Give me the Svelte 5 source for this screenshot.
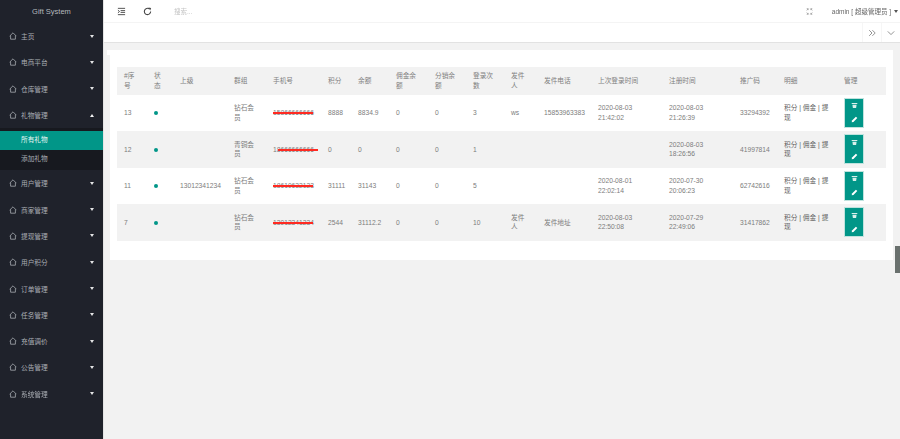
<script>
  const menu = [
    { name: '主页' },
    { name: '电商平台' },
    { name: '仓库管理' },
    { name: '礼物管理', open: true, children: ['所有礼物', '添加礼物'] },
    { name: '用户管理' },
    { name: '商家管理' },
    { name: '提现管理' },
    { name: '用户积分' },
    { name: '订单管理' },
    { name: '任务管理' },
    { name: '充值调价' },
    { name: '公告管理' },
    { name: '系统管理' }
  ];

  const widths = [30, 26, 54, 39, 55, 30, 38, 39, 38, 38, 33, 54, 71, 71, 44, 60, 49];
  const heads = ['#序号', '状态', '上级', '群组', '手机号', '积分', '余额', '佣金余额', '分销余额', '登录次数', '发件人', '发件电话', '上次登录时间', '注册时间', '推广码', '明细', '管理'];

  const rows = [
    { id: 13, parent: '', group: '钻石会员', phone: '15866666666', strike: 0, points: '8888', balance: '8834.9', logins: 3, sender: 'ws', tel: '15853963383', last: '2020-08-03 21:42:02', reg: '2020-08-03 21:26:39', code: '33294392' },
    { id: 12, parent: '', group: '青铜会员', phone: '18666666666', strike: 5, points: '0', balance: '0', logins: 1, sender: '', tel: '', last: '', reg: '2020-08-03 18:26:56', code: '41997814' },
    { id: 11, parent: '13012341234', group: '钻石会员', phone: '18610632123', strike: 0, points: '31111', balance: '31143', logins: 5, sender: '', tel: '', last: '2020-08-01 22:02:14', reg: '2020-07-30 20:06:23', code: '62742616' },
    { id: 7, parent: '', group: '钻石会员', phone: '13012341234', strike: 0, points: '2544', balance: '31112.2', logins: 10, sender: '发件人', tel: '发件地址', last: '2020-08-03 22:50:08', reg: '2020-07-29 22:49:06', code: '31417862' }
  ];
</script>

<div class="layout">
  <aside class="sidebar">
    <div class="brand">Gift System</div>
    <nav>
      {#each menu as item}
        <div class="item">
          <svg class="home" viewBox="0 0 10 10" width="8" height="8"><path d="M.8 5.200 5 1l4.200 4.200M2 4.500V9h6V4.500" fill="none" stroke="currentColor" stroke-width="0.9" /></svg>
          <span class="label">{item.name}</span>
          <i class="caret" class:up={item.open}></i>
        </div>
        {#if item.children}
          <div class="sub">
            {#each item.children as child, i}
              <div class="sub-item" class:active={i === 0}>{child}</div>
            {/each}
          </div>
        {/if}
      {/each}
    </nav>
  </aside>

  <div class="main">
    <header class="topbar">
      <svg class="tool" viewBox="0 0 10 10" width="9" height="9"><path d="M1 1.500h8M4 4h5M4 6h5M1 8.500h8M1 3.500 2.800 5 1 6.500" fill="none" stroke="#444" stroke-width="1" /></svg>
      <svg class="tool refresh" viewBox="0 0 10 10" width="9" height="9"><path d="M8.500 5A3.500 3.500 0 1 1 7 2.100" fill="none" stroke="#444" stroke-width="1.200" /><path d="M6 .5 9 1 8 3.800Z" fill="#444" /></svg>
      <span class="search">搜索...</span>
      <svg class="full" viewBox="0 0 10 10" width="7" height="7"><path d="M1 3.500 3.500 1M1 1h2v2M9 3.500 6.500 1M9 1H7v2M1 6.500 3.500 9M1 9h2V7M9 6.500 6.500 9M9 9H7V7" fill="none" stroke="#888" stroke-width="0.9" /></svg>
      <span class="user">admin [ 超级管理员 ]</span>
      <i class="user-caret"></i>
    </header>

    <div class="tabs">
      <span class="tab-btn">
        <svg viewBox="0 0 10 10" width="8" height="8"><path d="M1.500 1.500 5 5 1.500 8.500M5.500 1.500 9 5 5.500 8.500" fill="none" stroke="#777" stroke-width="1" /></svg>
      </span>
      <span class="tab-btn">
        <svg viewBox="0 0 10 10" width="8" height="8"><path d="M1 3l4 4 4-4" fill="none" stroke="#777" stroke-width="1" /></svg>
      </span>
    </div>

    <section class="content">
      <div class="lip"></div>
      <div class="card">
        <table>
          <colgroup>
            {#each widths as w}
              <col style="width: {w}px" />
            {/each}
          </colgroup>
          <thead>
            <tr>
              {#each heads as h}
                <th>{h}</th>
              {/each}
            </tr>
          </thead>
          <tbody>
            {#each rows as r}
              <tr>
                <td>{r.id}</td>
                <td><i class="dot"></i></td>
                <td>{r.parent}</td>
                <td class="cjk">{r.group}</td>
                <td class="phone"><span>{r.phone}<i class="strike" style="left: {r.strike}px"></i></span></td>
                <td>{r.points}</td>
                <td>{r.balance}</td>
                <td>0</td>
                <td>0</td>
                <td>{r.logins}</td>
                <td>{r.sender}</td>
                <td>{r.tel}</td>
                <td>{r.last}</td>
                <td>{r.reg}</td>
                <td>{r.code}</td>
                <td class="links cjk">积分 | 佣金 | 提现</td>
                <td class="actions">
                  <div class="btns">
                    <span class="btn">
                      <svg viewBox="0 0 10 10" width="7" height="7"><path d="M1 1.500h8v1.500H1zM2 3.800h6L7.300 8.500H2.700z" fill="#d8f0ea" /></svg>
                    </span>
                    <span class="btn">
                      <svg viewBox="0 0 10 10" width="7" height="7"><path d="M1 9l.5-2.500L7 1l2 2-5.500 5.500z" fill="#fff" /></svg>
                    </span>
                  </div>
                </td>
              </tr>
            {/each}
          </tbody>
        </table>
      </div>
    </section>
  </div>

  <i class="scroll-thumb"></i>
</div>

<style>
  :global(body) {
    margin: 0;
    background: #f2f2f2;
    font-family: "Liberation Sans", "Noto Sans CJK SC", sans-serif;
  }

  /* reference is a downscaled capture, everything in it is slightly soft.
     will-change keeps the text in its own layer so it gets grey antialiasing */
  .layout {
    display: flex;
    height: 439px;
    overflow: hidden;
    position: relative;
    filter: blur(0.5px);
    will-change: opacity;
    opacity: 0.999;
  }

  .sidebar {
    width: 103px;
    flex: none;
    background: #1f222b;
    border-right: 1px solid #e4e4e4;
  }

  .brand {
    height: 23px;
    line-height: 23px;
    text-align: center;
    font-size: 7.500px;
    color: #b4b8bd;
  }

  .item {
    height: 26.300px;
    display: flex;
    align-items: center;
    padding: 0 9px;
    font-size: 6.700px;
    color: #aaaeb4;
  }

  .home {
    color: #b4b8bd;
    margin-right: 4px;
  }

  .label {
    flex: 1;
  }

  .caret {
    width: 0;
    height: 0;
    border: 2.500px solid transparent;
    border-top: 3px solid #e4e5e6;
    border-bottom: 0;
  }

  .caret.up {
    border-top: 0;
    border-bottom: 3px solid #f2f2f2;
  }

  .sub {
    background: #17191f;
    padding: 3px 0 2px;
  }

  .sub-item {
    height: 18.500px;
    line-height: 18.500px;
    padding-left: 21px;
    font-size: 6.700px;
    color: #aaaeb4;
  }

  .sub-item.active {
    background: #009688;
    color: #eaf6f4;
  }

  .main {
    flex: 1;
    min-width: 0;
  }

  .topbar {
    height: 22px;
    background: #fff;
    display: flex;
    align-items: center;
    border-bottom: 1px solid #f4f4f4;
    font-size: 6.500px;
    padding-left: 13px;
  }

  .refresh {
    margin-left: 17px;
  }

  .search {
    margin-left: 22px;
    color: #c4c4c4;
  }

  .full {
    margin-left: auto;
  }

  .user {
    margin-left: 19px;
    color: #666;
    white-space: nowrap;
  }

  .user-caret {
    width: 0;
    height: 0;
    margin: 0 2px 0 3px;
    border: 2px solid transparent;
    border-top: 3px solid #555;
    border-bottom: 0;
  }

  .tabs {
    height: 19px;
    background: #fff;
    border-bottom: 1px solid #e2e2e2;
    display: flex;
    justify-content: flex-end;
  }

  .tab-btn {
    width: 18px;
    display: flex;
    align-items: center;
    justify-content: center;
    border-left: 1px solid #f6f6f6;
  }

  .content {
    padding: 7px 7px 0 6px;
    position: relative;
  }

  .lip {
    position: absolute;
    left: 3px;
    top: 7px;
    width: 6px;
    height: 5px;
    background: #fff;
  }

  .card {
    background: #fff;
    padding: 17px 7px 19px;
    height: 174px;
  }

  table {
    width: 769px;
    table-layout: fixed;
    border-collapse: collapse;
    font-size: 6.700px;
    line-height: 9.500px;
    color: #7c7c7c;
  }

  th {
    height: 27.500px;
    padding: 0 7px;
    font-weight: 400;
    text-align: left;
    background: #f2f2f2;
    color: #808080;
  }

  td {
    height: 36.500px;
    padding: 0 7px;
    box-sizing: border-box;
    white-space: normal;
  }

  td.cjk {
    word-break: break-all;
  }

  tbody tr:nth-child(even) {
    background: #f2f2f2;
  }

  .dot {
    display: block;
    width: 4px;
    height: 4px;
    border-radius: 50%;
    background: #009688;
    margin: 1px 0 0 -0.5px;
  }

  .phone span {
    position: relative;
    display: inline-block;
    white-space: nowrap;
  }

  .strike {
    position: absolute;
    top: 4px;
    width: 40px;
    height: 2px;
    background: #ff2a22;
  }

  .links {
    color: #5f5f5f;
  }

  .actions {
    padding: 0 0 0 8px;
  }

  .btns {
    width: 18px;
    background: #009688;
    outline: 1px solid #bfe3de;
  }

  .btn {
    height: 14px;
    display: flex;
    align-items: center;
    justify-content: center;
  }

  .scroll-thumb {
    position: absolute;
    left: 895px;
    top: 246px;
    width: 5px;
    height: 27px;
    background: #6a716e;
  }
</style>
